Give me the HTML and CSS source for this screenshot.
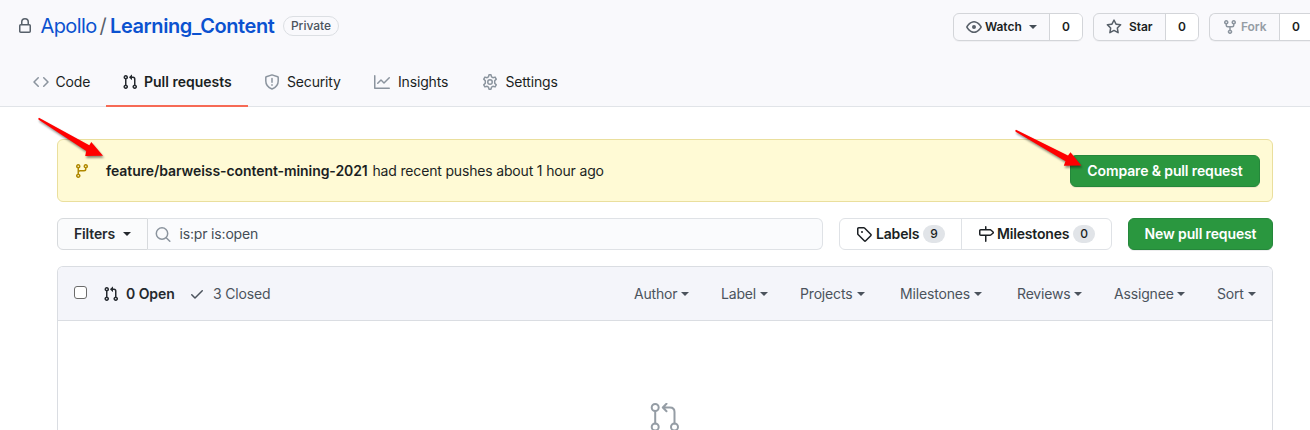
FILE: index.html
```html
<!DOCTYPE html>
<html lang="en">
<head>
<meta charset="utf-8">
<title>Pull requests · Apollo/Learning_Content</title>
<link rel="stylesheet" href="styles.css">
</head>
<body>
<svg class="sprite" aria-hidden="true">
  <symbol id="pr" viewBox="0 0 16 16"><path d="M7.177 3.073L9.573.677A.25.25 0 0110 .854v4.792a.25.25 0 01-.427.177L7.177 3.427a.25.25 0 010-.354zM3.75 2.5a.75.75 0 100 1.5.75.75 0 000-1.5zm-2.25.75a2.25 2.25 0 113 2.122v5.256a2.251 2.251 0 11-1.5 0V5.372A2.25 2.25 0 011.5 3.25zM11 2.5h-1V4h1a1 1 0 011 1v5.628a2.251 2.251 0 101.5 0V5A2.5 2.5 0 0011 2.5zm1 10.25a.75.75 0 111.5 0 .75.75 0 01-1.5 0zM3.75 12a.75.75 0 100 1.5.75.75 0 000-1.5z"/></symbol>
</svg>
<header class="repo-header">
  <div class="title-row">
    <svg class="icon lock" viewBox="0 0 16 16"><path d="M4 4v2h-.25A1.75 1.75 0 002 7.75v5.5c0 .966.784 1.75 1.75 1.75h8.5A1.75 1.75 0 0014 13.25v-5.5A1.75 1.75 0 0012.25 6H12V4a4 4 0 10-8 0zm6.5 2V4a2.5 2.5 0 10-5 0v2h5zM12 7.5h.25a.25.25 0 01.25.25v5.5a.25.25 0 01-.25.25h-8.5a.25.25 0 01-.25-.25v-5.5a.25.25 0 01.25-.25H12z"/></svg>
    <a class="owner">Apollo</a><span class="slash">/</span><a class="repo">Learning_Content</a>
    <span class="visibility">Private</span>
    <div class="actions">
      <div class="action watch">
        <span class="action-main"><svg class="icon" viewBox="0 0 16 16"><path d="M1.679 7.932c.412-.621 1.242-1.75 2.366-2.717C5.175 4.242 6.527 3.5 8 3.5c1.473 0 2.824.742 3.955 1.715 1.124.967 1.954 2.096 2.366 2.717a.119.119 0 010 .136c-.412.621-1.242 1.75-2.366 2.717C10.825 11.758 9.473 12.5 8 12.5c-1.473 0-2.824-.742-3.955-1.715C2.92 9.818 2.09 8.69 1.679 8.068a.119.119 0 010-.136zM8 2c-1.981 0-3.67.992-4.933 2.078C1.797 5.169.88 6.423.43 7.1a1.619 1.619 0 000 1.798c.45.678 1.367 1.932 2.637 3.024C4.329 13.008 6.019 14 8 14c1.981 0 3.67-.992 4.933-2.078 1.27-1.091 2.187-2.345 2.637-3.023a1.619 1.619 0 000-1.798c-.45-.678-1.367-1.932-2.637-3.023C11.671 2.992 9.981 2 8 2zm0 8a2 2 0 100-4 2 2 0 000 4z"/></svg><span class="action-text">Watch</span><i class="caret"></i></span><span class="action-count">0</span>
      </div>
      <div class="action star">
        <span class="action-main"><svg class="icon" viewBox="0 0 16 16"><path d="M8 .25a.75.75 0 01.673.418l1.882 3.815 4.21.612a.75.75 0 01.416 1.279l-3.046 2.97.719 4.192a.75.75 0 01-1.088.791L8 12.347l-3.766 1.98a.75.75 0 01-1.088-.79l.72-4.194L.818 6.374a.75.75 0 01.416-1.28l4.21-.611L7.327.668A.75.75 0 018 .25zm0 2.445L6.615 5.5a.75.75 0 01-.564.41l-3.097.45 2.24 2.184a.75.75 0 01.216.664l-.528 3.084 2.769-1.456a.75.75 0 01.698 0l2.77 1.456-.53-3.084a.75.75 0 01.216-.664l2.24-2.183-3.096-.45a.75.75 0 01-.564-.41L8 2.694v.001z"/></svg><span class="action-text">Star</span></span><span class="action-count">0</span>
      </div>
      <div class="action fork">
        <span class="action-main"><svg class="icon" viewBox="0 0 16 16"><path d="M5 3.25a.75.75 0 11-1.5 0 .75.75 0 011.5 0zm0 2.122a2.25 2.25 0 10-1.5 0v.878A2.25 2.25 0 005.75 8.5h1.5v2.128a2.251 2.251 0 101.5 0V8.5h1.5a2.25 2.25 0 002.25-2.25v-.878a2.25 2.25 0 10-1.5 0v.878a.75.75 0 01-.75.75h-4.5A.75.75 0 015 6.25v-.878zm3.75 7.378a.75.75 0 11-1.5 0 .75.75 0 011.5 0zm3-8.75a.75.75 0 100-1.5.75.75 0 000 1.5z"/></svg><span class="action-text">Fork</span></span><span class="action-count">0</span>
      </div>
    </div>
  </div>
  <nav class="tabs">
    <a class="tab tab-code"><svg class="icon" viewBox="0 0 16 16"><path d="M4.72 3.22a.75.75 0 011.06 1.06L2.06 8l3.72 3.72a.75.75 0 11-1.06 1.06L.47 8.53a.75.75 0 010-1.06l4.25-4.25zm6.56 0a.75.75 0 10-1.06 1.06L13.94 8l-3.72 3.72a.75.75 0 101.06 1.06l4.25-4.25a.75.75 0 000-1.06l-4.25-4.25z"/></svg>Code</a>
    <a class="tab tab-pulls selected"><svg class="icon"><use href="#pr"/></svg>Pull requests</a>
    <a class="tab tab-security"><svg class="icon line" viewBox="0 0 16 16"><path d="M8 .9l5.700 1.800q.5.2.5.7V7c0 3.700-2.300 6.500-6.200 8C4.100 13.500 1.800 10.700 1.800 7V3.400q0-.5.5-.7zM8 4.600v3.700M8 10.700v.5"/></svg>Security</a>
    <a class="tab tab-insights"><svg class="icon" viewBox="0 0 16 16"><path d="M1.5 1.75a.75.75 0 00-1.5 0v12.5c0 .414.336.75.75.75h14.5a.75.75 0 000-1.5H1.5V1.75zm14.28 2.53a.75.75 0 00-1.06-1.06L10 7.94 7.53 5.47a.75.75 0 00-1.06 0L3.22 8.72a.75.75 0 001.06 1.06L7 7.06l2.47 2.47a.75.75 0 001.06 0l5.25-5.25z"/></svg>Insights</a>
    <a class="tab tab-settings"><svg class="icon line" viewBox="0 0 16 16"><circle cx="8" cy="8" r="2.250"/><path d="M7 .85h2l.55 2.050 1.350.8 2.150-.6 1.200 2.050L12.700 6.700v2.600l1.550 1.550-1.200 2.050-2.150-.6-1.350.8L9 15.150H7l-.55-2.050-1.350-.8-2.150.6-1.200-2.050L3.300 9.300V6.700L1.750 5.150 2.950 3.100l2.150.6 1.350-.8z"/></svg>Settings</a>
  </nav>
</header>
<main class="content">
  <section class="notice">
    <svg class="icon" viewBox="0 0 16 16"><path d="M11.75 2.5a.75.75 0 100 1.5.75.75 0 000-1.5zm-2.25.75a2.25 2.25 0 113 2.122V6A2.5 2.5 0 0110 8.5H6a1 1 0 00-1 1v1.128a2.251 2.251 0 11-1.5 0V5.372a2.25 2.25 0 111.5 0v1.836A2.492 2.492 0 016 7h4a1 1 0 001-1v-.628A2.250 2.250 0 019.500 3.250zM4.250 12a.75.75 0 100 1.500.75.75 0 000-1.500zM3.500 3.250a.75.75 0 111.500 0 .75.75 0 01-1.500 0z"/></svg>
    <p class="notice-text"><strong>feature/barweiss-content-mining-2021</strong><span>had recent pushes about 1 hour ago</span></p>
    <button class="btn-green compare">Compare &amp; pull request</button>
  </section>
  <section class="toolbar">
    <button class="filters">Filters<i class="caret"></i></button>
    <div class="search"><svg class="icon line" viewBox="0 0 16 16"><circle cx="7" cy="7.500" r="5.700"/><path d="M11.200 11.700l3.600 3.600"/></svg><span>is:pr is:open</span></div>
    <div class="subnav">
      <a class="labels"><svg class="icon" viewBox="0 0 16 16"><path d="M2.5 7.775V2.75a.25.25 0 01.25-.25h5.025a.25.25 0 01.177.073l6.25 6.25a.25.25 0 010 .354l-5.025 5.025a.25.25 0 01-.354 0l-6.25-6.25a.25.25 0 01-.073-.177zm-1.5 0V2.75C1 1.784 1.784 1 2.75 1h5.025c.464 0 .91.184 1.238.513l6.25 6.25a1.75 1.75 0 010 2.474l-5.026 5.026a1.75 1.75 0 01-2.474 0l-6.25-6.25A1.75 1.75 0 011 7.775zM6 5a1 1 0 100 2 1 1 0 000-2z"/></svg><span>Labels</span><b class="counter">9</b></a>
      <a class="milestones"><svg class="icon" viewBox="0 0 16 16"><path d="M7.75 0a.75.75 0 01.75.75V3h3.634c.414 0 .814.147 1.13.414l2.07 1.75a1.75 1.75 0 010 2.672l-2.07 1.75a1.75 1.75 0 01-1.13.414H8.5v5.25a.75.75 0 11-1.5 0V10H2.75A1.75 1.75 0 011 8.25v-3.5C1 3.784 1.784 3 2.75 3H7V.75A.75.75 0 017.75 0zm0 8.5h4.384a.25.25 0 00.161-.06l2.07-1.75a.25.25 0 000-.38l-2.07-1.75a.25.25 0 00-.161-.06H2.75a.25.25 0 00-.25.25v3.5c0 .138.112.25.25.25h5z"/></svg><span>Milestones</span><b class="counter">0</b></a>
    </div>
    <button class="btn-green new-pr">New pull request</button>
  </section>
  <section class="list">
    <div class="list-header">
      <span class="checkbox"></span>
      <a class="open"><svg class="icon"><use href="#pr"/></svg>0 Open</a>
      <a class="closed"><svg class="icon" viewBox="0 0 16 16"><path d="M13.78 4.22a.75.75 0 010 1.06l-7.25 7.25a.75.75 0 01-1.06 0L2.22 9.28a.75.75 0 011.06-1.06L6 10.94l6.72-6.72a.75.75 0 011.06 0z"/></svg>3 Closed</a>
      <div class="menus">
        <span class="menu m-author">Author<i class="caret"></i></span>
        <span class="menu m-label">Label<i class="caret"></i></span>
        <span class="menu m-projects">Projects<i class="caret"></i></span>
        <span class="menu m-milestones">Milestones<i class="caret"></i></span>
        <span class="menu m-reviews">Reviews<i class="caret"></i></span>
        <span class="menu m-assignee">Assignee<i class="caret"></i></span>
        <span class="menu m-sort">Sort<i class="caret"></i></span>
      </div>
    </div>
    <div class="blank">
      <svg class="blank-icon" viewBox="0 0 32 27"><circle cx="5.200" cy="4.500" r="3.500"/><circle cx="5.200" cy="24" r="3.500"/><circle cx="24.500" cy="24" r="3.500"/><path d="M5.200 8v12.500M24.500 20.500V9q0-4.500-4.500-4.500h-7M16.500.8l-3.700 3.700 3.700 3.700"/></svg>
    </div>
  </section>
</main>
<svg class="arrow arrow-left" viewBox="0 0 70 46"><path d="M2 .8q-1.200.7-.3 2L49.200 34l-1 5 17.800-.3L54.300 25l-2 3.300z"/></svg>
<svg class="arrow arrow-right" viewBox="0 0 70 46"><path d="M2 .8q-1.200.7-.3 2L51.500 32.200l-1.700 4.600 17.500-.4L56.500 23.300l-2.500 3.200z"/></svg>
</body>
</html>
```

FILE: styles.css
```css
* { box-sizing: border-box; }
body {
  margin: 0;
  height: 430px;
  overflow: hidden;
  position: relative;
  background: #fff;
  color: #1b1f23;
  font: 14px/20px Inter, "Liberation Sans", sans-serif;
  letter-spacing: -0.17px;
}
button { font: inherit; letter-spacing: inherit; padding: 0; }
a, span, button { white-space: nowrap; }
.sprite { display: none; }
.icon { width: 16px; height: 16px; flex: none; fill: currentColor; fill-rule: evenodd; }
.line { fill: none; stroke: currentColor; stroke-width: 1.5; stroke-linejoin: round; stroke-linecap: round; }
.caret { flex: none; border: 4px solid transparent; border-top-color: currentColor; border-bottom: 0; }

.repo-header { height: 107px; background: #f9f9fc; border-bottom: 1px solid #e1e4e8; }
.title-row { display: flex; align-items: center; height: 52px; padding-left: 17px; }
.lock { color: #57606a; }
.owner, .slash, .repo { font-size: 20px; line-height: 30px; letter-spacing: -0.6px; color: #0b52d0; }
.owner { width: 59px; margin-left: 7.5px; }
.slash { width: 10.5px; color: #586069; }
.repo { width: 165px; font-weight: 600; letter-spacing: -0.4px; }
.visibility { width: 56px; height: 20px; margin-left: 8px; border: 1px solid #dcdfe3; border-radius: 10px; font-size: 12px; line-height: 18px; font-weight: 500; text-align: center; color: #4b535c; letter-spacing: 0; }
.actions { display: flex; gap: 10px; margin-left: auto; margin-right: -2px; height: 28px; margin-top: 2px; }
.action { display: flex; border: 1px solid #d3d5d9; border-radius: 6px; overflow: hidden; font-size: 12px; font-weight: 600; line-height: 26px; letter-spacing: -0.05px; box-shadow: 0 1px 0 rgba(27,31,35,.04); }
.action-main { display: flex; align-items: center; padding-left: 12px; border-right: 1px solid #d3d5d9; }
.action-main .icon { color: #586069; }
.action-count { flex: 1; background: #fff; text-align: center; }
.watch { width: 130px; }
.watch .action-main { width: 96px; }
.watch .action-text { width: 44px; margin-left: 3px; }
.watch .caret { color: #444d56; }
.star { width: 106px; }
.star .action-main { width: 72px; }
.star .action-text { margin-left: 7px; }
.fork { width: 103px; border-right: 0; border-radius: 6px 0 0 6px; }
.fork .action-main { width: 70px; color: #959da5; }
.fork .icon { color: #8b949e; }
.fork .action-text { margin-left: 3px; }

.tabs { display: flex; height: 55px; padding-left: 17px; }
.tab { display: flex; align-items: center; height: 55px; padding: 5px 0 0 16px; gap: 7px; }
.tab .icon { color: #8b949e; }
.tab-code { width: 89px; gap: 6.5px; }
.tab-pulls { width: 142px; gap: 6px; }
.tab-security { width: 110px; }
.tab-insights { width: 108px; gap: 8px; }
.tab-settings { gap: 7.5px; }
.tab.selected { font-weight: 600; letter-spacing: 0; border-bottom: 2px solid #f66a55; padding-top: 7px; }
.tab.selected .icon { color: #24292e; }

.content { padding: 32px 37px 0 57px; }
.notice { display: flex; align-items: center; height: 63px; padding: 0 12px 0 16px; background: #fffad5; border: 1px solid #eadf9d; border-radius: 6px; }
.notice .icon { color: #b08800; }
.notice-text { display: flex; margin: 0 0 0 16px; }
.notice-text strong { width: 266.5px; font-weight: 600; letter-spacing: -0.08px; }
.btn-green { height: 32px; border: 1px solid #25873b; border-radius: 6px; background: #2a973f; color: #fff; font-weight: 600; letter-spacing: -0.13px; box-shadow: 0 1px 0 rgba(27,31,35,.08); }
.compare { width: 190px; margin-left: auto; }
.new-pr { width: 145px; margin-left: 16px; }

.toolbar { display: flex; height: 32px; margin-top: 16px; }
.filters { display: flex; align-items: center; width: 91px; padding-left: 16px; gap: 8px; border: 1px solid #d7dadd; border-radius: 6px 0 0 6px; background: #fafbfc; font-weight: 600; color: #24292e; }
.search { display: flex; align-items: center; width: 675px; padding-left: 7px; gap: 8.5px; border: 1px solid #dfe2e6; border-left: 0; border-radius: 0 6px 6px 0; background: #fafbfd; color: #444d56; }
.search .icon { color: #8b949e; }
.subnav { display: flex; width: 273px; margin-left: 16px; border: 1px solid #dfe2e6; border-radius: 6px; font-weight: 600; }
.subnav a { display: flex; align-items: center; padding-left: 16px; }
.labels { width: 122px; border-right: 1px solid #dfe2e6; }
.labels span { width: 44px; margin: 0 3px 0 4px; }
.milestones span { width: 72px; margin: 0 4px 0 3px; }
.counter { width: 22px; height: 18px; border-radius: 9px; background: #e1e4e8; font-size: 12px; line-height: 18px; font-weight: 500; text-align: center; }

.list { height: 164px; margin-top: 16px; border: 1px solid #dadde2; border-bottom: 0; border-radius: 6px 6px 0 0; }
.list-header { display: flex; align-items: center; height: 54px; padding: 0 16px; background: #f4f5fa; border-bottom: 1px solid #dadde2; border-radius: 5px 5px 0 0; color: #4b535c; }
.checkbox { width: 13px; height: 13px; margin: 0 16px 3px 0; border: 1px solid #6b6b6b; border-radius: 3px; background: #fff; }
.open, .closed { display: flex; align-items: center; gap: 7px; }
.open { width: 86px; font-weight: 600; color: #24292e; letter-spacing: -0.05px; }
.closed { gap: 8px; }
.menus { display: flex; margin-left: auto; }
.menu { display: flex; align-items: center; justify-content: space-between; margin-left: 32px; }
.m-author { width: 55px; }
.m-label { width: 47px; }
.m-projects { width: 65px; }
.m-milestones { width: 82px; margin-left: 35px; }
.m-reviews { width: 65px; margin-left: 35px; }
.m-assignee { width: 71px; }
.m-sort { width: 39px; }
.blank { display: flex; justify-content: center; padding: 82px 0 0 2px; }
.blank-icon { width: 32px; height: 27px; fill: none; stroke: #959da5; stroke-width: 2; stroke-linecap: round; stroke-linejoin: round; }

.arrow { position: absolute; width: 70px; height: 46px; fill: #f00; filter: drop-shadow(1px 2px 1px rgba(0,0,0,.45)); }
.arrow-left { left: 37px; top: 117px; }
.arrow-right { left: 1014px; top: 129px; }
```
